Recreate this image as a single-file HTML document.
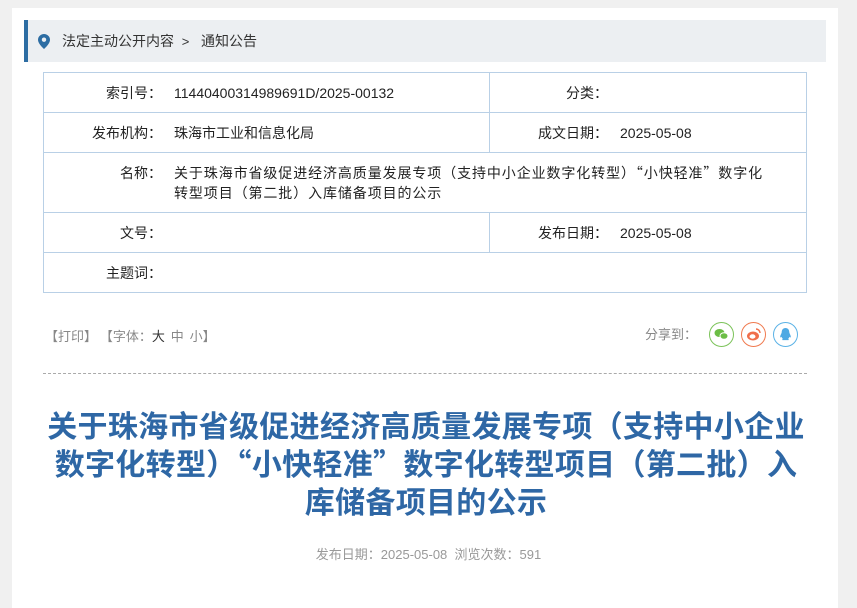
<!DOCTYPE html>
<html><head><meta charset="utf-8"><style>
body{margin:0;background:#f0f0f0;font-family:"Liberation Sans","Noto Sans CJK SC",sans-serif;width:857px;height:572px;overflow:hidden;position:relative}
.cj{font-family:"Noto Sans CJK SC",sans-serif}
.panel{position:absolute;left:12px;top:8px;width:826px;height:600px;background:#fff}
.bc{position:absolute;left:24px;top:20px;width:798px;height:42px;background:#eceff2;border-left:4px solid #2d6da3;font-size:14px;color:#333;line-height:42px}
.bc .pin{position:absolute;left:10px;top:14px}
.bc .t{position:absolute;left:34px}
table{position:absolute;left:43px;top:72px;width:764px;border-collapse:collapse;font-size:14px;color:#222}
td{border:1px solid #b9d0e6;padding:0;vertical-align:middle}
td.l{width:118px;text-align:right;padding-right:8px;border-right:none;font-family:"Noto Sans CJK SC",sans-serif}
td.v{padding-left:4px;border-left:none}
.tools{position:absolute;left:45px;top:326px;font-size:13px;color:#888}
.share{position:absolute;left:645px;top:324px;font-size:13px;color:#888}
.ic{position:absolute;width:23px;height:23px;border-radius:50%;top:322px}
.dash{position:absolute;left:43px;top:373px;width:764px;border-top:1px dashed #aaa}
h1{position:absolute;left:20px;top:405px;width:812px;margin:0;text-align:center;font-size:30px;letter-spacing:0.3px;line-height:38px;color:#2e67a5;font-weight:bold;font-family:"Noto Sans CJK SC",sans-serif;white-space:nowrap}
.meta{position:absolute;left:0;width:857px;top:544px;text-align:center;font-size:13px;color:#999}
</style></head><body>
<div class="panel"></div>
<div class="bc"><svg class="pin" width="12" height="15" viewBox="0 0 12 15"><path d="M6 0C2.7 0 0 2.6 0 5.8 0 10 6 15 6 15s6-5 6-9.2C12 2.6 9.3 0 6 0z" fill="#2d6da3"/><circle cx="6" cy="5.7" r="2.2" fill="#eceff2"/></svg><span class="t">法定主动公开内容 &nbsp;<span style="font-size:13px">&gt;</span>&nbsp;&nbsp; 通知公告</span></div>
<table>
<tr style="height:40px"><td class="l">索引号：</td><td class="v" style="width:315px">11440400314989691D/2025-00132</td><td class="l" style="width:104px">分类：</td><td class="v"></td></tr>
<tr style="height:40px"><td class="l">发布机构：</td><td class="v">珠海市工业和信息化局</td><td class="l">成文日期：</td><td class="v">2025-05-08</td></tr>
<tr style="height:60px"><td class="l" style="vertical-align:top;padding-top:10px">名称：</td><td class="v cj" colspan="3" style="line-height:20px;padding-right:16px;letter-spacing:0.9px">关于珠海市省级促进经济高质量发展专项（支持中小企业数字化转型）“小快轻准”数字化<br>转型项目（第二批）入库储备项目的公示</td></tr>
<tr style="height:40px"><td class="l">文号：</td><td class="v"></td><td class="l">发布日期：</td><td class="v">2025-05-08</td></tr>
<tr style="height:40px"><td class="l">主题词：</td><td class="v" colspan="3"></td></tr>
</table>
<div class="tools cj">【打印】 【字体：<span style="color:#333">大</span>&nbsp; 中 &nbsp;小】</div>
<div class="share cj">分享到：</div>
<div class="ic" style="left:709px;border:1px solid #7cc35a"><svg width="23" height="23"><ellipse cx="9.5" cy="10" rx="5" ry="4" fill="#6bbd45"/><ellipse cx="14" cy="13" rx="4" ry="3.3" fill="#6bbd45" stroke="#fff" stroke-width="1"/></svg></div>
<div class="ic" style="left:741px;border:1px solid #f07a4f"><svg width="23" height="23"><ellipse cx="11" cy="13" rx="6" ry="4.5" fill="#f06e4b"/><ellipse cx="10.5" cy="13.5" rx="3" ry="2.2" fill="#fff"/><path d="M14 6a4 4 0 0 1 4 4" stroke="#f06e4b" stroke-width="1.5" fill="none"/></svg></div>
<div class="ic" style="left:773px;border:1px solid #5ab2e6"><svg width="23" height="23"><path d="M11.5 5c-2.5 0-3.8 2-3.8 4.3 0 1-1.5 3-1.5 4.5 0 1 .7.7 1.3 0 .3 1 1 1.8 1.5 2.2-.8.3-1.2.8-.5 1.1h6c.7-.3.3-.8-.5-1.1.5-.4 1.2-1.2 1.5-2.2.6.7 1.3 1 1.3 0 0-1.5-1.5-3.5-1.5-4.5C15.3 7 14 5 11.5 5z" fill="#4fa9e3"/></svg></div>
<div class="dash"></div>
<h1>关于珠海市省级促进经济高质量发展专项（支持中小企业<br>数字化转型）“小快轻准”数字化转型项目（第二批）入<br>库储备项目的公示</h1>
<div class="meta">发布日期：2025-05-08&nbsp; 浏览次数：591</div>
</body></html>
